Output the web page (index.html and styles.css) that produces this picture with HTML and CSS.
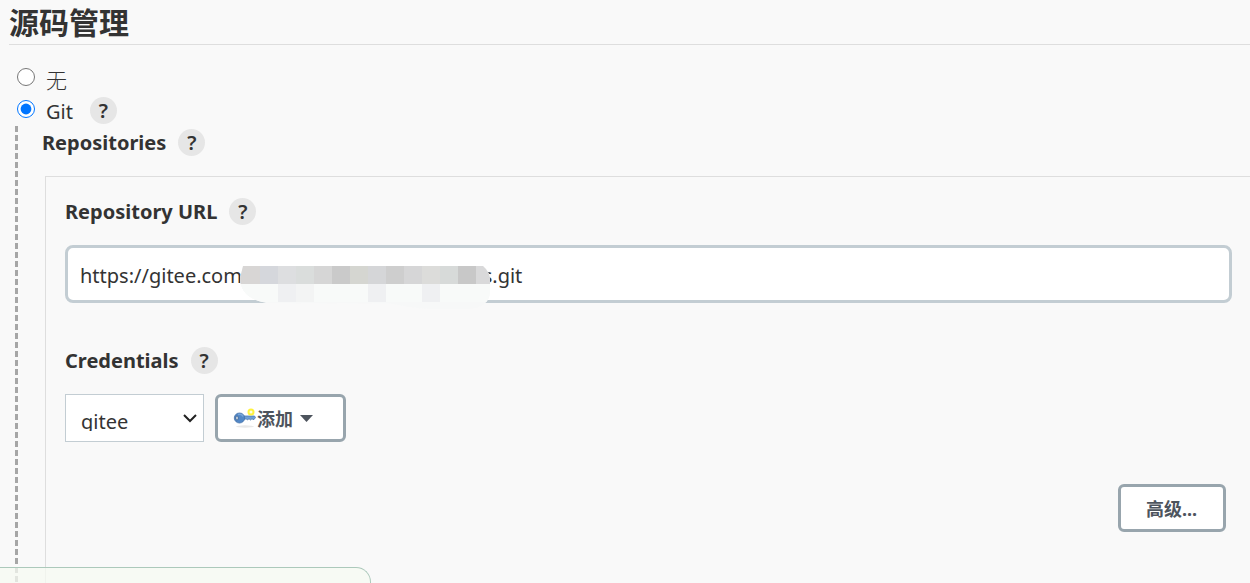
FILE: index.html
```html
<!DOCTYPE html>
<html lang="zh-CN">
<head>
<meta charset="utf-8">
<title>源码管理</title>
<link rel="stylesheet" href="styles.css">
</head>
<body>
<main class="config">
  <h1 class="section-title">源码管理</h1>
  <div class="choices">
    <div class="choice">
      <input class="radio" type="radio" name="scm" id="scm-none">
      <label class="choice-label" for="scm-none">无</label>
    </div>
    <div class="choice">
      <input class="radio" type="radio" name="scm" id="scm-git" checked>
      <label class="choice-label git-label" for="scm-git">Git</label>
      <button class="help" type="button">?</button>
    </div>
  </div>
  <div class="nested">
    <div class="heading">
      <span>Repositories</span>
      <button class="help" type="button">?</button>
    </div>
    <section class="repository">
      <div class="heading">
        <label for="url">Repository URL</label>
        <button class="help" type="button">?</button>
      </div>
      <div class="url-field">
        <input class="url" id="url" type="text" value="https://gitee.com/&#8195;&#8195;&#8195;&#8195;&#8195;&#8195;&#8195;&#8195;&#8195;&#8195;&#8195;&#8194;&#8198;s.git">
        <svg class="mask" width="250" height="44" viewBox="0 0 250 44" aria-hidden="true">
          <defs><clipPath id="blob"><path d="M3 0H243Q250 6 250 14V26Q249 42 228 43H190Q172 42 150 37.500L26 37Q0 32 0 12Z"/></clipPath></defs>
          <g clip-path="url(#blob)" shape-rendering="crispEdges">
            <path fill="#f7f8f8" d="M0 0h250v44H0z"/>
            <path fill="#f8faf9" d="M0 18h250v18H0z"/>
            <path fill="#d8d6d5" d="M0 0h20v18H0z"/>
            <path fill="#d5d7dc" d="M20 0h18v18H20z"/>
            <path fill="#dddee0" d="M38 0h18v18H38z"/>
            <path fill="#dadddc" d="M56 0h18v18H56z"/>
            <path fill="#d6d6d6" d="M74 0h18v18H74z"/>
            <path fill="#cacaca" d="M92 0h18v18H92z"/>
            <path fill="#d5d6d1" d="M110 0h18v18H110z"/>
            <path fill="#d5d6d8" d="M128 0h18v18H128z"/>
            <path fill="#cecece" d="M146 0h18v18H146z"/>
            <path fill="#d6d6d7" d="M164 0h18v18H164z"/>
            <path fill="#dcdcda" d="M182 0h18v18H182z"/>
            <path fill="#d7dad9" d="M200 0h18v18H200z"/>
            <path fill="#c8c8c8" d="M218 0h18v18H218z"/>
            <path fill="#d9d9da" d="M236 0h14v18H236z"/>
            <path fill="#eff0f2" d="M38 18h18v18H38zM128 18h18v18H128zM182 18h18v18H182z"/>
            <path fill="#f3f4f4" d="M56 18h18v18H56z"/>
          </g>
        </svg>
      </div>
      <div class="heading">
        <label for="credentials">Credentials</label>
        <button class="help" type="button">?</button>
      </div>
      <div class="credentials">
        <div class="select-box">
          <select class="select" id="credentials"><option>gitee</option></select>
          <svg class="chevron" width="14" height="9" viewBox="0 0 14 9" aria-hidden="true"><path d="M1 1l6 6 6-6" fill="none" stroke="#222" stroke-width="2"/></svg>
        </div>
        <button class="button add" type="button">
          <svg width="24" height="22" viewBox="0 0 24 22" aria-hidden="true">
            <ellipse cx="12" cy="19.500" rx="9" ry="1.200" fill="#e8e8e8"/>
            <path d="M10 9h11.500l1 1.500-1.500 2h-1l-1-.8-1.500 1.300-1.500-1.300-1.500 1.300-1-1H10z" fill="#6f9fd6" stroke="#4f7bb0" stroke-width=".8"/>
            <ellipse cx="6.500" cy="11" rx="5.200" ry="5" fill="#5288c7" stroke="#4672a8" stroke-width=".8"/>
            <path d="M5 7.500q4-1 5 2" fill="none" stroke="#79a5d7" stroke-width="1.500"/>
            <ellipse cx="4" cy="11" rx="1.200" ry="2" fill="#e8f0f5" stroke="#345580" stroke-width=".7"/>
            <circle cx="18" cy="5" r="2.500" fill="#fffde0" stroke="#fff23c" stroke-width="2"/>
          </svg>
          <span>添加</span>
          <svg class="caret" width="13" height="7" viewBox="0 0 13 7" aria-hidden="true"><path d="M0 0h13L6.500 7z" fill="#4d545d"/></svg>
        </button>
      </div>
      <div class="actions"><button class="button advanced" type="button">高级...</button></div>
    </section>
  </div>
</main>
<div class="bottom-bar"></div>
</body>
</html>
```
FILE: styles.css
```css
* { box-sizing: border-box; }
html, body { height: 100%; }
body {
  margin: 0;
  background: #f9f9f9;
  color: #333;
  font-family: "Noto Sans", "Noto Sans CJK SC", sans-serif;
  font-size: 20px;
}
button, input, select { margin: 0; font: inherit; color: inherit; }
.config { display: flex; flex-direction: column; min-height: 100%; }
.section-title {
  height: 45px;
  margin: 0 0 0 9px;
  border-bottom: 1px solid #dedede;
  font-size: 30px;
  line-height: 46px;
}
.choices { padding: 17px 0 0 17px; }
.choice { display: flex; align-items: center; height: 32px; line-height: 30px; }
.radio { width: 18px; height: 18px; margin: 0 11px 2px 0; }
.choice-label { padding-top: 4px; font-weight: 300; font-size: 21px; }
.git-label { margin-right: 17px; font-weight: 400; font-size: 20px; }
.help {
  width: 27px;
  height: 27px;
  padding: 0;
  border: 0;
  border-radius: 50%;
  background: #e6e6e6;
  font-weight: 600;
  line-height: 28px;
}
.nested {
  display: flex;
  flex: 1;
  flex-direction: column;
  margin-left: 15px;
  padding-left: 27px;
  background: repeating-linear-gradient(#a6a6a6 0 6px, transparent 6px 9px) left top / 3px 100% no-repeat;
}
.heading { display: flex; align-items: center; gap: 12px; height: 32px; font-weight: 700; }
.repository {
  flex: 1;
  margin: 18px 0 0 3px;
  padding: 18px 18px 0 19px;
  border: solid #dedede;
  border-width: 1px 0 0 1px;
}
.url-field { position: relative; margin: 18px 0 41px; }
.url {
  display: block;
  width: 100%;
  height: 58px;
  padding: 2px 12px 0;
  border: 3px solid #c3cdd3;
  border-radius: 8px;
  background: #fff;
}
.mask { position: absolute; left: 175px; top: 21px; }
.credentials { display: flex; gap: 11px; margin-top: 18px; }
.select-box { position: relative; width: 139px; }
.select {
  width: 100%;
  height: 48px;
  padding: 17px 15px 10px;
  appearance: none;
  border: 1px solid #c3cdd3;
  border-radius: 0;
  background: #fff;
  line-height: 20px;
}
.chevron { position: absolute; right: 7px; top: 20px; }
.button {
  display: flex;
  align-items: center;
  height: 48px;
  padding: 0 25px;
  border: 3px solid #98a5ad;
  border-radius: 6px;
  background: #fff;
  color: #4d545d;
  font-size: 18px;
  font-weight: 700;
}
.add { width: 131px; padding: 0 15px; }
.advanced { min-width: 108px; }
.caret { margin-left: 7px; }
.actions { display: flex; justify-content: flex-end; padding: 42px 6px 0 0; }
.bottom-bar {
  position: fixed;
  left: 0;
  bottom: 0;
  width: 371px;
  height: 16px;
  border: solid #acc9bb;
  border-width: 1px 1px 0 0;
  border-radius: 0 15px 0 0;
  background: rgba(246, 250, 241, .75);
}
```
